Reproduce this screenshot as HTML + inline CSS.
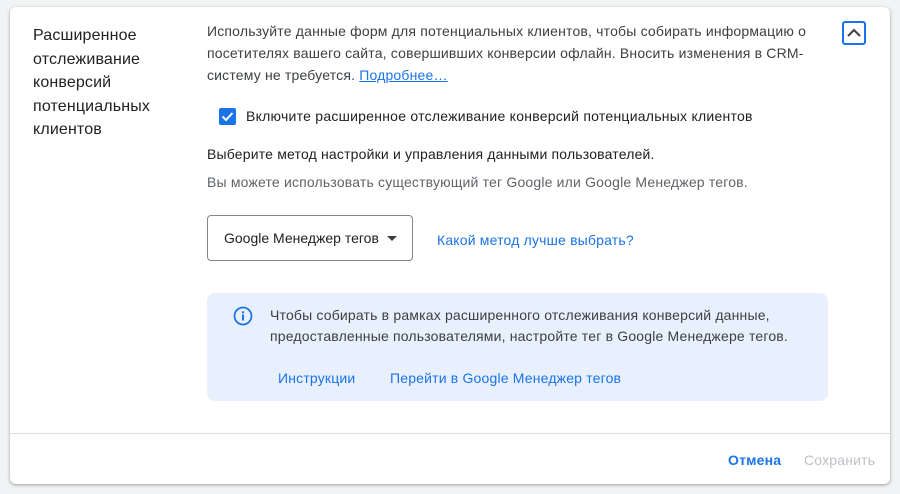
<!DOCTYPE html>
<html><head><meta charset="utf-8"><style>
body{margin:0;width:900px;height:494px;background:#f1f3f4;font-family:"Liberation Sans",Arial,sans-serif;position:relative;overflow:hidden}
.card{position:absolute;left:10px;top:7px;width:880px;height:477px;background:#fff;border-radius:6px;box-shadow:0 1px 2px rgba(60,64,67,.3),0 1px 3px 1px rgba(60,64,67,.15)}
.a{position:absolute;white-space:nowrap}
.t{font-size:16px;color:#202124;line-height:23.5px;left:23px;top:17px;letter-spacing:0.15px}
.p{font-size:14px;color:#3c4043;line-height:22px;letter-spacing:0.18px}
.l{color:#1a73e8}
</style></head><body>
<div class="card">
<div class="a t">Расширенное<br>отслеживание<br>конверсий<br>потенциальных<br>клиентов</div>
<div class="a p" style="left:197px;top:13px">Используйте данные форм для потенциальных клиентов, чтобы собирать информацию о<br>посетителях вашего сайта, совершивших конверсии офлайн. Вносить изменения в CRM-<br>систему не требуется. <span class="l" style="text-decoration:underline">Подробнее…</span></div>
<div class="a" style="left:832px;top:14px;width:24px;height:24px;border:2px solid #1a73e8;border-radius:3px;box-sizing:border-box"><svg width="20" height="20" viewBox="0 0 20 20"><path d="M4 13 L10 7 L16 13" fill="none" stroke="#3c4043" stroke-width="2"/></svg></div>
<div class="a" style="left:209px;top:101px;width:17px;height:17px;background:#1a73e8;border-radius:2px"><svg width="17" height="17" viewBox="0 0 17 17"><path d="M3.5 8.5 L7 12 L13.5 5" fill="none" stroke="#fff" stroke-width="2"/></svg></div>
<div class="a p" style="left:236px;top:98px;color:#202124;letter-spacing:0.25px">Включите расширенное отслеживание конверсий потенциальных клиентов</div>
<div class="a p" style="left:197px;top:136px;color:#202124">Выберите метод настройки и управления данными пользователей.</div>
<div class="a p" style="left:197px;top:164px;color:#5f6368">Вы можете использовать существующий тег Google или Google Менеджер тегов.</div>
<div class="a" style="left:197px;top:208px;width:206px;height:46px;border:1px solid #80868b;border-radius:4px;box-sizing:border-box"></div>
<div class="a p" style="left:214px;top:220px;color:#202124;letter-spacing:0">Google Менеджер тегов</div>
<div class="a" style="left:377px;top:229px;width:0;height:0;border-left:5px solid transparent;border-right:5px solid transparent;border-top:5px solid #3c4043"></div>
<div class="a p l" style="left:427px;top:222px">Какой метод лучше выбрать?</div>
<div class="a" style="left:197px;top:286px;width:621px;height:108px;background:#e8f0fe;border-radius:8px"></div>
<div class="a" style="left:223px;top:299px"><svg width="20" height="20" viewBox="0 0 20 20"><circle cx="10" cy="10" r="8.5" fill="none" stroke="#1a73e8" stroke-width="1.8"/><rect x="9" y="8.5" width="2" height="6" fill="#1a73e8"/><rect x="9" y="5.3" width="2" height="2" fill="#1a73e8"/></svg></div>
<div class="a p" style="left:260px;top:298px;line-height:21px">Чтобы собирать в рамках расширенного отслеживания конверсий данные,<br>предоставленные пользователями, настройте тег в Google Менеджере тегов.</div>
<div class="a p l" style="left:268px;top:360px">Инструкции</div>
<div class="a p l" style="left:380px;top:360px">Перейти в Google Менеджер тегов</div>
<div class="a" style="left:0;top:426px;width:880px;height:1px;background:#dadce0"></div>
<div class="a p l" style="left:718px;top:442px;font-weight:bold">Отмена</div>
<div class="a p" style="left:794px;top:442px;color:#bdc1c6">Сохранить</div>
</div>
</body></html>
